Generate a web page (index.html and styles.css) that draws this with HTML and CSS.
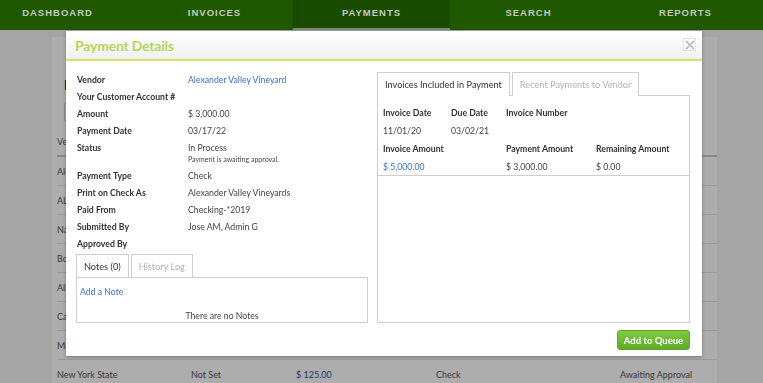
FILE: index.html
```html
<!DOCTYPE html>
<html lang="en">

<head>
    <meta charset="UTF-8">
    <meta name="viewport" content="width=device-width, initial-scale=1.0">
    <title>Payments</title>
    <link rel="stylesheet" href="styles.css">
</head>

<body>
    <nav class="topnav">
        <ul>
            <li>Dashboard</li>
            <li>Invoices</li>
            <li class="active">Payments</li>
            <li>Search</li>
            <li>Reports</li>
        </ul>
    </nav>

    <div class="page">
        <h1>Payments</h1>
        <div class="search-box"></div>

        <table class="payments-table">
            <thead>
                <tr>
                    <th>Vendor</th>
                    <th>Account</th>
                    <th>Amount</th>
                    <th>Type</th>
                    <th>Status</th>
                </tr>
            </thead>
            <tbody>
                <tr><td>Alexander Valley Vineyard</td><td>Not Set</td><td class="money">$ 3,000.00</td><td>Check</td><td>Awaiting Approval</td></tr>
                <tr><td>ALDI Inc.</td><td>Not Set</td><td class="money">$ 410.00</td><td>Check</td><td>Awaiting Approval</td></tr>
                <tr><td>Napa Wine Co</td><td>Not Set</td><td class="money">$ 980.00</td><td>Check</td><td>Awaiting Approval</td></tr>
                <tr><td>Boston Market</td><td>Not Set</td><td class="money">$ 62.50</td><td>Check</td><td>Awaiting Approval</td></tr>
                <tr><td>Allied Supply</td><td>Not Set</td><td class="money">$ 215.00</td><td>Check</td><td>Awaiting Approval</td></tr>
                <tr><td>California Water</td><td>Not Set</td><td class="money">$ 88.40</td><td>Check</td><td>Awaiting Approval</td></tr>
                <tr><td>Morgan Farms</td><td>Not Set</td><td class="money">$ 1,250.00</td><td>Check</td><td>Awaiting Approval</td></tr>
                <tr><td>New York State</td><td>Not Set</td><td class="money">$ 125.00</td><td>Check</td><td>Awaiting Approval</td></tr>
            </tbody>
        </table>
    </div>

    <div class="overlay"></div>

    <div class="modal">
        <div class="modal-header">
            <h2>Payment Details</h2>
            <button class="close-btn" aria-label="Close">
                <svg width="10" height="10" viewBox="0 0 10 10">
                    <path d="M1 1 L9 9 M9 1 L1 9" stroke="#c2c2c2" stroke-width="1.8" fill="none"/>
                </svg>
            </button>
        </div>

        <div class="modal-body">
            <div class="details-col">
                <dl class="details">
                    <dt>Vendor</dt>
                    <dd><a href="#">Alexander Valley Vineyard</a></dd>
                    <dt>Your Customer Account #</dt>
                    <dd></dd>
                    <dt>Amount</dt>
                    <dd>$ 3,000.00</dd>
                    <dt>Payment Date</dt>
                    <dd>03/17/22</dd>
                    <dt>Status</dt>
                    <dd>In Process<span class="sub-note">Payment is awaiting approval.</span></dd>
                    <dt>Payment Type</dt>
                    <dd>Check</dd>
                    <dt>Print on Check As</dt>
                    <dd>Alexander Valley Vineyards</dd>
                    <dt>Paid From</dt>
                    <dd>Checking-*2019</dd>
                    <dt>Submitted By</dt>
                    <dd>Jose AM, Admin G</dd>
                    <dt>Approved By</dt>
                    <dd></dd>
                </dl>

                <div class="tabs small-tabs">
                    <div class="tab active">Notes (0)</div>
                    <div class="tab">History Log</div>
                </div>
                <div class="tab-panel notes-panel">
                    <a href="#">Add a Note</a>
                    <p class="empty">There are no Notes</p>
                </div>
            </div>

            <div class="invoices-col">
                <div class="tabs">
                    <div class="tab active">Invoices Included in Payment</div>
                    <div class="tab">Recent Payments to Vendor</div>
                </div>
                <div class="tab-panel invoices-panel">
                    <div class="invoice-grid">
                        <span class="head">Invoice Date</span>
                        <span class="head">Due Date</span>
                        <span class="head span2">Invoice Number</span>

                        <span>11/01/20</span>
                        <span>03/02/21</span>
                        <span class="span2"></span>

                        <span class="head span2">Invoice Amount</span>
                        <span class="head">Payment Amount</span>
                        <span class="head">Remaining Amount</span>

                        <span class="span2"><a href="#">$ 5,000.00</a></span>
                        <span>$ 3,000.00</span>
                        <span>$ 0.00</span>
                    </div>
                </div>
            </div>
        </div>

        <div class="modal-footer">
            <button class="btn-green">Add to Queue</button>
        </div>
    </div>
</body>

</html>
```

FILE: styles.css
```css
body {
    font-family: Lato, "Liberation Sans", sans-serif;
    font-size: 8.7px;
    margin: 0;
    background-color: #f3f3f3;
    color: #333;
    height: 383px;
    overflow: hidden;
}

a {
    color: #3b6fd1;
    text-decoration: none;
}

/* top navigation */
.topnav {
    position: relative;
    z-index: 20;
    background-color: #1f5801;
    height: 30px;
    overflow: hidden;
}

.topnav ul {
    list-style: none;
    margin: 0 0 0 -21px;
    padding: 0;
    display: grid;
    grid-template-columns: repeat(5, 157px);
}

.topnav li {
    height: 30px;
    line-height: 26px;
    text-align: center;
    text-transform: uppercase;
    font-family: "Liberation Sans", Arial, sans-serif;
    font-weight: bold;
    font-size: 9.5px;
    letter-spacing: 1px;
    color: #c2cbbd;
    box-sizing: border-box;
}

.topnav li.active {
    background-color: #1a4c00;
    border-bottom: 2px solid #7d8879;
}

/* page behind the dialog */
.page {
    margin: 7px 46px 0 52px;
    background: #fff;
    padding: 0 0 0 5px;
    height: 346px;
    font-size: 9px;
}

.page h1 {
    margin: 0;
    padding: 38px 0 0 7px;
    font-size: 13px;
    line-height: 20px;
}

.search-box {
    margin: 7px 0 0 7px;
    width: 200px;
    height: 18px;
    border: 1px solid #ccc;
    border-radius: 3px;
}

.payments-table {
    width: 100%;
    border-collapse: collapse;
    margin-top: 6px;
    color: #555;
}

.payments-table th {
    text-align: left;
    font-weight: normal;
    height: 27px;
    padding: 0;
    border-bottom: 2px solid #c8c8c8;
}

.payments-table td {
    height: 28px;
    padding: 0;
    border-bottom: 1px solid #e4e4e4;
}

.payments-table th:nth-child(1) { width: 134px; }
.payments-table th:nth-child(2) { width: 105px; }
.payments-table th:nth-child(3) { width: 140px; }
.payments-table th:nth-child(4) { width: 184px; }

.payments-table .money {
    color: #2f55a8;
}

.overlay {
    position: fixed;
    top: 30px;
    left: 0;
    right: 0;
    bottom: 0;
    background: rgba(0, 0, 0, 0.32);
    z-index: 10;
}

/* dialog */
.modal {
    position: absolute;
    z-index: 30;
    top: 31px;
    left: 66px;
    width: 636px;
    background: #fff;
    box-shadow: 0 1px 3px rgba(0, 0, 0, 0.35);
}

.modal-header {
    height: 28px;
    border-bottom: 2px solid #d3e36b;
    background: linear-gradient(#ffffff, #f1f1f1);
    display: flex;
    align-items: center;
    justify-content: space-between;
    padding: 0 6px 0 9px;
}

.modal-header h2 {
    margin: 0;
    font-size: 14px;
    color: #b6d65c;
    letter-spacing: -0.2px;
}

.close-btn {
    width: 13px;
    height: 13px;
    padding: 0;
    margin-top: -1px;
    border: 1px solid #e4e4e4;
    background: #fafafa;
    display: flex;
    align-items: center;
    justify-content: center;
}

.modal-body {
    display: flex;
    gap: 9px;
    padding: 10px 12px 0 10px;
}

.details-col {
    width: 292px;
}

.invoices-col {
    flex: 1;
    display: flex;
    flex-direction: column;
}

.details {
    display: grid;
    grid-template-columns: 111px 1fr;
    margin: 0 0 1px 0;
    padding-left: 1px;
}

.details dt {
    font-weight: bold;
    line-height: 17px;
    color: #333;
    white-space: nowrap;
}

.details dd {
    margin: 0;
    line-height: 17px;
    color: #444;
}

.sub-note {
    display: block;
    font-size: 7px;
    line-height: 11px;
    margin-top: -2px;
    margin-bottom: 2px;
    color: #444;
}

/* tabs */
.tabs {
    display: flex;
    gap: 2px;
    height: 24px;
}

.tab {
    border: 1px solid #cfcfcf;
    border-bottom: none;
    padding: 0 7px;
    line-height: 24px;
    font-size: 9.2px;
    color: #b3b3b3;
    background: #fff;
    position: relative;
    top: 1px;
}

.tab.active {
    color: #333;
}

.small-tabs .tab {
    padding: 0 7px;
}

.tab-panel {
    border: 1px solid #cfcfcf;
}

.notes-panel {
    height: 44px;
    padding: 0 3px;
    position: relative;
}

.notes-panel a {
    display: block;
    margin-top: 8px;
}

.notes-panel .empty {
    margin: 0;
    position: absolute;
    left: 0;
    right: 0;
    bottom: 1px;
    text-align: center;
    color: #444;
}

.invoices-panel {
    height: 226px;
}

.invoice-grid {
    display: grid;
    grid-template-columns: 68px 55px 90px 1fr;
    grid-auto-rows: 18px;
    align-items: center;
    padding: 7px 5px 0;
    border-bottom: 1px solid #cfcfcf;
    color: #444;
}

.invoice-grid .head {
    font-weight: bold;
    color: #333;
}

.invoice-grid .span2 {
    grid-column: span 2;
}

.invoice-grid .head.span2 + .head {
    grid-column: auto;
}

.modal-footer {
    display: flex;
    justify-content: flex-end;
    padding: 7px 12px 6px 0;
}

.btn-green {
    font-family: Lato, "Liberation Sans", sans-serif;
    font-size: 9.5px;
    font-weight: bold;
    color: #fff;
    height: 20px;
    width: 73px;
    padding: 0;
    border: 1px solid #5fa82c;
    border-radius: 3px;
    background: linear-gradient(#80c843, #5eab2a);
}
```
